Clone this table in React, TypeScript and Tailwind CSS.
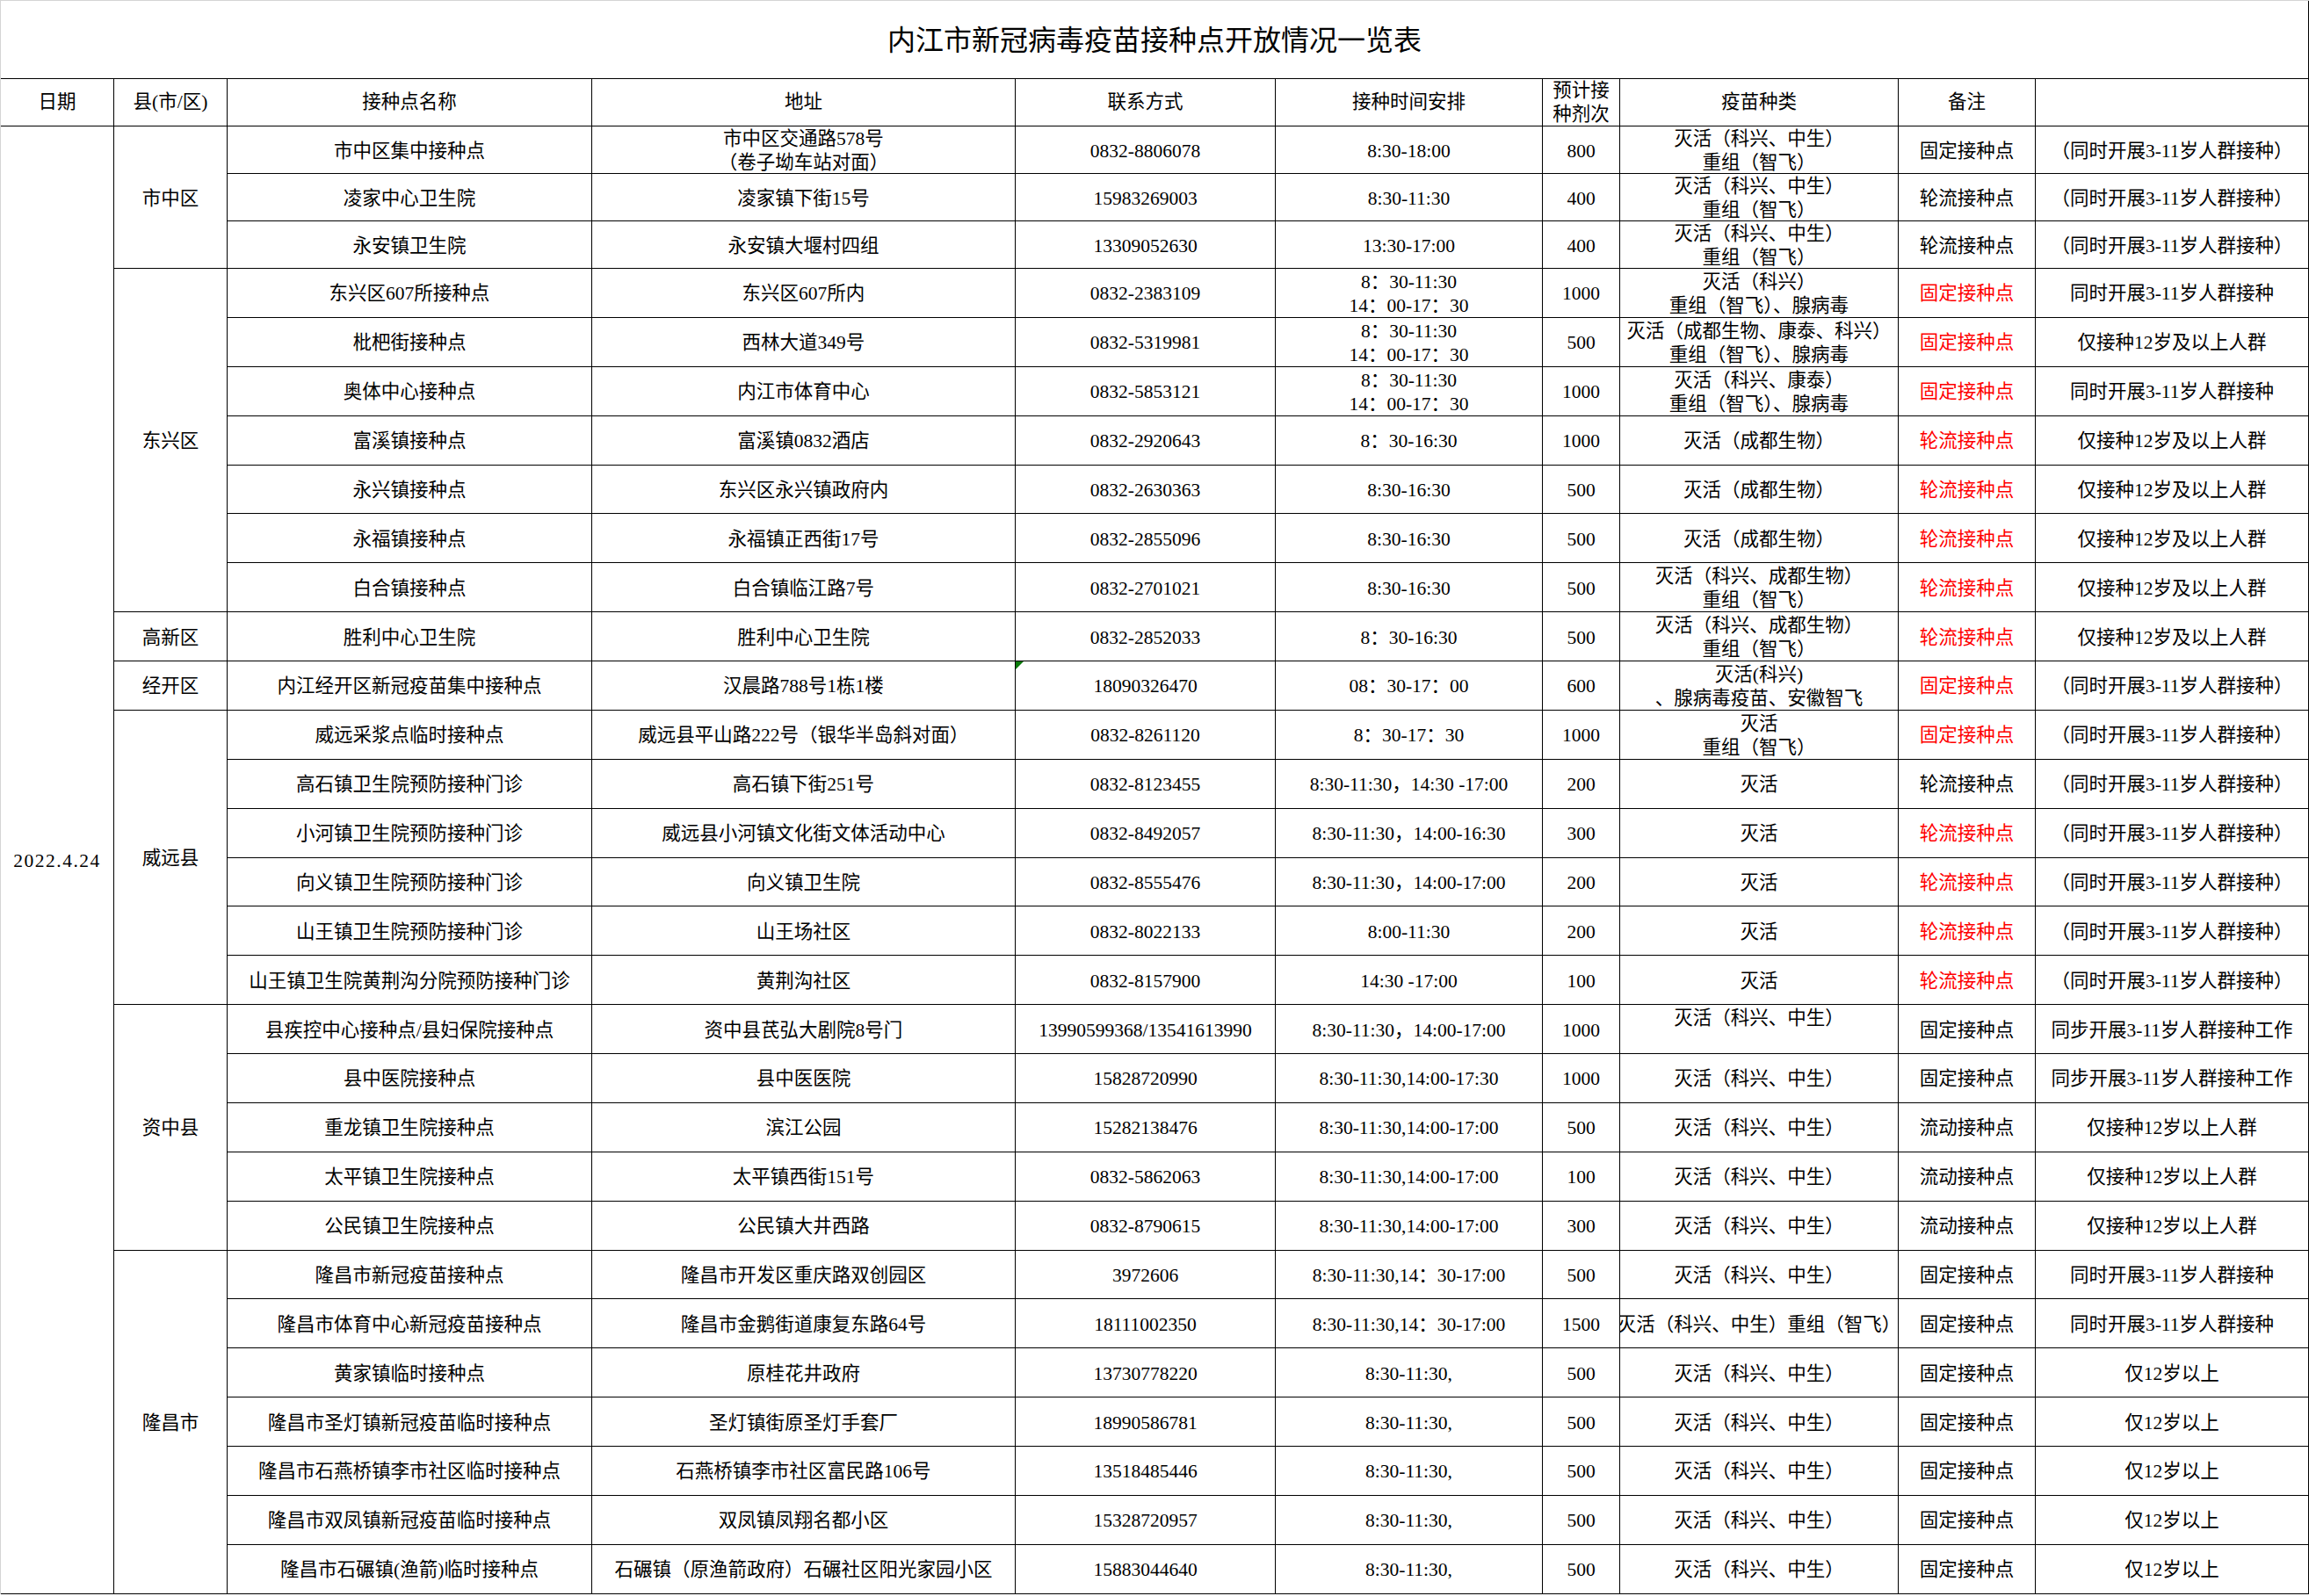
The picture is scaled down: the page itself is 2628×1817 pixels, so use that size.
import React from 'react';

type Row = {
  name: string;
  addr: string[];
  phone: string;
  time: string[];
  count: string;
  vac: string[];
  note: string;
  red: boolean;
  remark: string;
  flag?: boolean;
};

type Group = { county: string; span: string; rows: Row[] };

const S1 = '（同时开展3-11岁人群接种）';
const S2 = '同时开展3-11岁人群接种';
const S3 = '仅接种12岁及以上人群';
const S4 = '同步开展3-11岁人群接种工作';
const S5 = '仅接种12岁以上人群';
const S6 = '仅12岁以上';
const KZ = ['灭活（科兴、中生）', '重组（智飞）'];
const T2 = ['8：30-11:30', '14：00-17：30'];
const LKZ = ['灭活（科兴、中生）'];

const groups: Group[] = [
  {
    county: '市中区',
    span: 'row-span-3',
    rows: [
      { name: '市中区集中接种点', addr: ['市中区交通路578号', '（卷子坳车站对面）'], phone: '0832-8806078', time: ['8:30-18:00'], count: '800', vac: KZ, note: '固定接种点', red: false, remark: S1 },
      { name: '凌家中心卫生院', addr: ['凌家镇下街15号'], phone: '15983269003', time: ['8:30-11:30'], count: '400', vac: KZ, note: '轮流接种点', red: false, remark: S1 },
      { name: '永安镇卫生院', addr: ['永安镇大堰村四组'], phone: '13309052630', time: ['13:30-17:00'], count: '400', vac: KZ, note: '轮流接种点', red: false, remark: S1 },
    ],
  },
  {
    county: '东兴区',
    span: 'row-span-7',
    rows: [
      { name: '东兴区607所接种点', addr: ['东兴区607所内'], phone: '0832-2383109', time: T2, count: '1000', vac: ['灭活（科兴）', '重组（智飞）、腺病毒'], note: '固定接种点', red: true, remark: S2 },
      { name: '枇杷街接种点', addr: ['西林大道349号'], phone: '0832-5319981', time: T2, count: '500', vac: ['灭活（成都生物、康泰、科兴）', '重组（智飞）、腺病毒'], note: '固定接种点', red: true, remark: S3 },
      { name: '奥体中心接种点', addr: ['内江市体育中心'], phone: '0832-5853121', time: T2, count: '1000', vac: ['灭活（科兴、康泰）', '重组（智飞）、腺病毒'], note: '固定接种点', red: true, remark: S2 },
      { name: '富溪镇接种点', addr: ['富溪镇0832酒店'], phone: '0832-2920643', time: ['8：30-16:30'], count: '1000', vac: ['灭活（成都生物）'], note: '轮流接种点', red: true, remark: S3 },
      { name: '永兴镇接种点', addr: ['东兴区永兴镇政府内'], phone: '0832-2630363', time: ['8:30-16:30'], count: '500', vac: ['灭活（成都生物）'], note: '轮流接种点', red: true, remark: S3 },
      { name: '永福镇接种点', addr: ['永福镇正西街17号'], phone: '0832-2855096', time: ['8:30-16:30'], count: '500', vac: ['灭活（成都生物）'], note: '轮流接种点', red: true, remark: S3 },
      { name: '白合镇接种点', addr: ['白合镇临江路7号'], phone: '0832-2701021', time: ['8:30-16:30'], count: '500', vac: ['灭活（科兴、成都生物）', '重组（智飞）'], note: '轮流接种点', red: true, remark: S3 },
    ],
  },
  {
    county: '高新区',
    span: 'row-span-1',
    rows: [
      { name: '胜利中心卫生院', addr: ['胜利中心卫生院'], phone: '0832-2852033', time: ['8：30-16:30'], count: '500', vac: ['灭活（科兴、成都生物）', '重组（智飞）'], note: '轮流接种点', red: true, remark: S3 },
    ],
  },
  {
    county: '经开区',
    span: 'row-span-1',
    rows: [
      { name: '内江经开区新冠疫苗集中接种点', addr: ['汉晨路788号1栋1楼'], phone: '18090326470', time: ['08：30-17：00'], count: '600', vac: ['灭活(科兴)', '、腺病毒疫苗、安徽智飞'], note: '固定接种点', red: true, remark: S1, flag: true },
    ],
  },
  {
    county: '威远县',
    span: 'row-span-6',
    rows: [
      { name: '威远采浆点临时接种点', addr: ['威远县平山路222号（银华半岛斜对面）'], phone: '0832-8261120', time: ['8：30-17：30'], count: '1000', vac: ['灭活', '重组（智飞）'], note: '固定接种点', red: true, remark: S1 },
      { name: '高石镇卫生院预防接种门诊', addr: ['高石镇下街251号'], phone: '0832-8123455', time: ['8:30-11:30，14:30 -17:00'], count: '200', vac: ['灭活'], note: '轮流接种点', red: false, remark: S1 },
      { name: '小河镇卫生院预防接种门诊', addr: ['威远县小河镇文化街文体活动中心'], phone: '0832-8492057', time: ['8:30-11:30，14:00-16:30'], count: '300', vac: ['灭活'], note: '轮流接种点', red: true, remark: S1 },
      { name: '向义镇卫生院预防接种门诊', addr: ['向义镇卫生院'], phone: '0832-8555476', time: ['8:30-11:30，14:00-17:00'], count: '200', vac: ['灭活'], note: '轮流接种点', red: true, remark: S1 },
      { name: '山王镇卫生院预防接种门诊', addr: ['山王场社区'], phone: '0832-8022133', time: ['8:00-11:30'], count: '200', vac: ['灭活'], note: '轮流接种点', red: true, remark: S1 },
      { name: '山王镇卫生院黄荆沟分院预防接种门诊', addr: ['黄荆沟社区'], phone: '0832-8157900', time: ['14:30 -17:00'], count: '100', vac: ['灭活'], note: '轮流接种点', red: true, remark: S1 },
    ],
  },
  {
    county: '资中县',
    span: 'row-span-5',
    rows: [
      { name: '县疾控中心接种点/县妇保院接种点', addr: ['资中县芪弘大剧院8号门'], phone: '13990599368/13541613990', time: ['8:30-11:30，14:00-17:00'], count: '1000', vac: ['灭活（科兴、中生）', '\u00a0'], note: '固定接种点', red: false, remark: S4 },
      { name: '县中医院接种点', addr: ['县中医医院'], phone: '15828720990', time: ['8:30-11:30,14:00-17:30'], count: '1000', vac: LKZ, note: '固定接种点', red: false, remark: S4 },
      { name: '重龙镇卫生院接种点', addr: ['滨江公园'], phone: '15282138476', time: ['8:30-11:30,14:00-17:00'], count: '500', vac: LKZ, note: '流动接种点', red: false, remark: S5 },
      { name: '太平镇卫生院接种点', addr: ['太平镇西街151号'], phone: '0832-5862063', time: ['8:30-11:30,14:00-17:00'], count: '100', vac: LKZ, note: '流动接种点', red: false, remark: S5 },
      { name: '公民镇卫生院接种点', addr: ['公民镇大井西路'], phone: '0832-8790615', time: ['8:30-11:30,14:00-17:00'], count: '300', vac: LKZ, note: '流动接种点', red: false, remark: S5 },
    ],
  },
  {
    county: '隆昌市',
    span: 'row-span-7',
    rows: [
      { name: '隆昌市新冠疫苗接种点', addr: ['隆昌市开发区重庆路双创园区'], phone: '3972606', time: ['8:30-11:30,14：30-17:00'], count: '500', vac: LKZ, note: '固定接种点', red: false, remark: S2 },
      { name: '隆昌市体育中心新冠疫苗接种点', addr: ['隆昌市金鹅街道康复东路64号'], phone: '18111002350', time: ['8:30-11:30,14：30-17:00'], count: '1500', vac: ['灭活（科兴、中生）重组（智飞）'], note: '固定接种点', red: false, remark: S2 },
      { name: '黄家镇临时接种点', addr: ['原桂花井政府'], phone: '13730778220', time: ['8:30-11:30,'], count: '500', vac: LKZ, note: '固定接种点', red: false, remark: S6 },
      { name: '隆昌市圣灯镇新冠疫苗临时接种点', addr: ['圣灯镇街原圣灯手套厂'], phone: '18990586781', time: ['8:30-11:30,'], count: '500', vac: LKZ, note: '固定接种点', red: false, remark: S6 },
      { name: '隆昌市石燕桥镇李市社区临时接种点', addr: ['石燕桥镇李市社区富民路106号'], phone: '13518485446', time: ['8:30-11:30,'], count: '500', vac: LKZ, note: '固定接种点', red: false, remark: S6 },
      { name: '隆昌市双凤镇新冠疫苗临时接种点', addr: ['双凤镇凤翔名都小区'], phone: '15328720957', time: ['8:30-11:30,'], count: '500', vac: LKZ, note: '固定接种点', red: false, remark: S6 },
      { name: '隆昌市石碾镇(渔箭)临时接种点', addr: ['石碾镇（原渔箭政府）石碾社区阳光家园小区'], phone: '15883044640', time: ['8:30-11:30,'], count: '500', vac: LKZ, note: '固定接种点', red: false, remark: S6 },
    ],
  },
];

const cell =
  'flex flex-col items-center justify-center overflow-hidden whitespace-nowrap border-r border-b border-black text-center leading-[27px]';
const bodyCell = cell + ' pt-[3px]';

function Lines({ lines }: { lines: string[] }) {
  return (
    <>
      {lines.map((l, i) => (
        <div key={i}>{l}</div>
      ))}
    </>
  );
}

export default function App() {
  return (
    <div className="bg-white font-['Liberation_Serif','Noto_Sans_CJK_SC',serif] text-[21.5px] text-black">
      <div className="grid w-[2628px] grid-cols-[129px_129px_415px_482px_296px_304px_88px_317px_156px_311px] grid-rows-[89px_54px_54px_54px_54px_repeat(27,55.89px)] border-l border-t border-[#d4d4d4]">
        <div className="col-span-10 flex items-center justify-center border-r border-b border-black pt-[1px] text-[32px]">
          内江市新冠病毒疫苗接种点开放情况一览表
        </div>

        <div className={cell}>日期</div>
        <div className={cell}>县(市/区)</div>
        <div className={cell}>接种点名称</div>
        <div className={cell}>地址</div>
        <div className={cell}>联系方式</div>
        <div className={cell}>接种时间安排</div>
        <div className={cell}>
          <div>预计接</div>
          <div>种剂次</div>
        </div>
        <div className={cell}>疫苗种类</div>
        <div className={cell}>备注</div>
        <div className={cell}></div>

        <div className={bodyCell + ' row-span-[30] tracking-[1.5px]'}>2022.4.24</div>
        {groups.map((g) =>
          g.rows.map((r, i) => (
            <React.Fragment key={g.county + i}>
              {i === 0 && <div className={bodyCell + ' ' + g.span}>{g.county}</div>}
              <div className={bodyCell}>{r.name}</div>
              <div className={bodyCell}>
                <Lines lines={r.addr} />
              </div>
              <div className={bodyCell + ' relative'}>
                {r.flag && (
                  <span className="absolute left-0 top-0 h-0 w-0 border-t-[9px] border-r-[9px] border-t-[#0a7a0a] border-r-transparent" />
                )}
                {r.phone}
              </div>
              <div className={bodyCell}>
                <Lines lines={r.time} />
              </div>
              <div className={bodyCell}>{r.count}</div>
              <div className={bodyCell}>
                <Lines lines={r.vac} />
              </div>
              <div className={bodyCell + (r.red ? ' text-[#ff0000]' : '')}>{r.note}</div>
              <div className={bodyCell}>{r.remark}</div>
            </React.Fragment>
          ))
        )}
      </div>
    </div>
  );
}
